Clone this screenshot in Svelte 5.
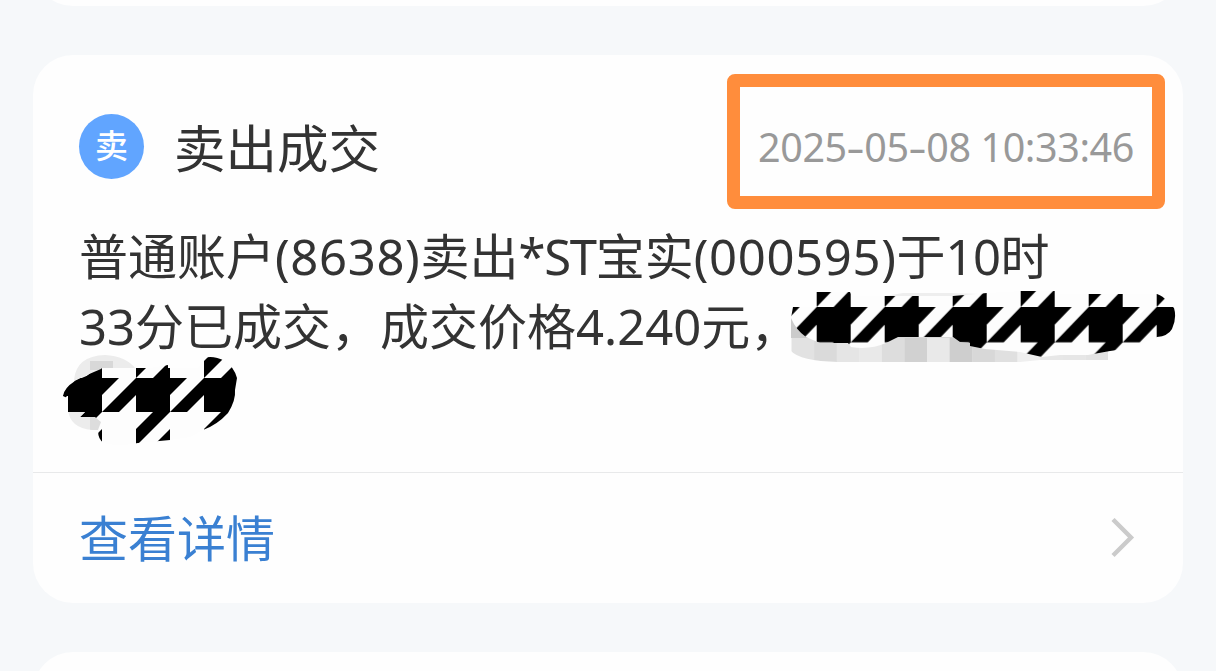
<script>
	const title = '卖出成交';
	const date = ['2025', '05', '08'];
	const clock = '10:33:46';

	// mosaic columns under the first covered stretch
	const mosaic = ['#e2e2e2', '#dadada', '#e5e5e5', '#e9e9e9', '#dddddd', '#d1d1d1', '#e9e9e9', '#cecece', '#d8d8d8', '#e0e0e0', '#efefef', '#e7e7e7', '#e6e6e6', '#e3e3e3'];
	const cell = 22.6;
</script>

<main>
	<section class="card previous"></section>

	<section class="card">
		<div class="content">
			<header>
				<span class="badge">卖</span>
				<h1>{title}</h1>
				<time>{date[0]}<b>-</b>{date[1]}<b>-</b>{date[2]} {clock}</time>
			</header>

			<p>
				<span class="line">普通账户<i>(8638)</i>卖出<i class="tight">*ST</i>宝实<i>(000595)</i>于<i class="hour">10</i>时</span>
				<span class="line">33分已成交，成交价格4.240元，</span>
			</p>
		</div>

		<a class="details" href="#details">
			<span>查看详情</span>
			<svg width="24" height="40" viewBox="0 0 24 40">
				<path d="M2 1.5 L20 19.5 L2 37.5" fill="none" stroke="#cbcbcb" stroke-width="4.4" />
			</svg>
		</a>
	</section>

	<section class="card next"></section>

	<!-- marker strokes over the message -->
	<svg class="marks" width="1216" height="671" viewBox="0 0 1216 671">
		<defs>
			<pattern id="tooth-a" patternUnits="userSpaceOnUse" width="68" height="68" patternTransform="translate(816.7 307) scale(1 1.04)">
				<rect width="68" height="68" fill="#fdfdfd" />
				<path d="M0 0H34V34H0Z M34 0H51L34 17Z M68 0L34 34H51L68 17Z M17 34H34L0 68V51Z M34 51V68H17Z" />
			</pattern>
			<pattern id="tooth-b" patternUnits="userSpaceOnUse" width="68" height="68" patternTransform="translate(136 378)">
				<rect width="68" height="68" fill="#fdfdfd" />
				<path d="M0 0H34V34H0Z M34 0H51L34 17Z M68 0L34 34H51L68 17Z M17 34H34L0 68V51Z M34 51V68H17Z" />
			</pattern>
			<clipPath id="mosaic-a">
				<path d="M791 318H1108V360H1040L1020 362H838Q800 361 791 351Z" />
			</clipPath>
			<clipPath id="mosaic-b">
				<path d="M74 380Q76 356 105 355Q126 356 136 369V430H92Q70 428 68 410Z" />
			</clipPath>
		</defs>

		<g clip-path="url(#mosaic-a)">
			{#each mosaic as color, i}
				<rect x={791.5 + i * cell} y="338" width={cell + 0.3} height="24" fill={color} />
			{/each}
			<rect x="791" y="318" width="24" height="20" fill="#cbcbcb" />
			<rect x="890" y="330" width="70" height="8" fill="#d9d9d9" />
		</g>
		<path d="M885 296L903 293H950L980 294V298H885Z" fill="#eeeeee" />
		<path
			d="M793 307H816V292H850L852 296H953L987 293L1021 291H1055L1058 294H1157Q1163 296 1167 301L1174 308Q1177 318 1172 329Q1168 336 1157 337L1142 344L1124 346Q1122 350 1110 351L1088 355L1060 355L1042 357L1020 352L985 349L970 346V343L960 342L953 337H898L886 343Q870 350 851 347L848 343L820 343L806 337Q796 330 791 318Z"
			fill="url(#tooth-a)"
		/>

		<g clip-path="url(#mosaic-b)">
			<rect x="68" y="355" width="68" height="75" fill="#ececec" />
			<rect x="90" y="361" width="23" height="9" fill="#d8d8d8" />
			<rect x="90" y="408" width="23" height="22" fill="#dddddd" />
		</g>
		<path
			d="M63 396Q64 388 75 381Q84 376 101 369L102 368H150L168 365V368H198L204 358Q213 355 225 361Q234 367 237 378L235 390Q236 400 228 413Q217 425 203 430L190 437L170 440L138 443Q118 447 104 443Q98 440 98 430L101 422L95 417H80L85 412H67V398Z"
			fill="url(#tooth-b)"
		/>
		<path d="M63 396L75 381L84 377L101 370V412H68V396Z" />
	</svg>
</main>

<style>
	:global(body) {
		margin: 0;
		background: #f6f8fa;
	}
	main {
		position: relative;
		box-sizing: border-box;
		height: 671px;
		padding: 0 33px;
		overflow: hidden;
		display: flex;
		flex-direction: column;
		gap: 49px;
		font-family: "Noto Sans", "Noto Sans CJK SC", sans-serif;
		color: #333;
	}
	.card {
		flex: none;
		background: #fefefe;
		border-radius: 40px;
	}
	.previous {
		height: 80px;
		margin-top: -74px;
	}
	.next {
		height: 80px;
	}
	.content {
		box-sizing: border-box;
		height: 417px;
		padding: 58px 46px 0;
	}
	header {
		display: flex;
		align-items: center;
		height: 68px;
	}
	.badge {
		width: 65px;
		height: 65px;
		margin-bottom: 2px;
		border-radius: 50%;
		background: #61a5ff;
		color: #fff;
		font-size: 33px;
		font-weight: 500;
		line-height: 64px;
		text-align: center;
	}
	h1 {
		margin: 2px 0 0 30px;
		font-size: 51.5px;
		font-weight: 400;
		line-height: 68px;
	}
	time {
		position: relative;
		margin-left: auto;
		margin-right: 3px;
		font-size: 39.5px;
		letter-spacing: -0.4px;
		line-height: 68px;
		color: #999;
		white-space: nowrap;
	}
	time b {
		display: inline-block;
		margin: 0 2.6px;
		font-weight: 400;
		transform: scaleX(1.45);
	}
	time::after {
		content: "";
		position: absolute;
		box-sizing: border-box;
		right: -31px;
		top: -39px;
		width: 438px;
		height: 135px;
		border: 13px solid #ff8d3c;
		border-radius: 8px;
	}
	p {
		margin: 40px 0 0;
		font-size: 49px;
		line-height: 70px;
	}
	.line {
		display: block;
		white-space: nowrap;
	}
	i {
		font-style: normal;
		letter-spacing: 0.65px;
	}
	.tight {
		letter-spacing: -1.3px;
	}
	.hour {
		letter-spacing: -0.5px;
	}
	.details {
		box-sizing: border-box;
		height: 131px;
		padding: 0 48px 0 46px;
		border-top: 1px solid #e8e9ea;
		display: flex;
		align-items: center;
		justify-content: space-between;
		color: #3a80d2;
		font-size: 49px;
		line-height: 70px;
		text-decoration: none;
	}
	.marks {
		position: absolute;
		left: 0;
		top: 0;
		pointer-events: none;
	}
</style>
